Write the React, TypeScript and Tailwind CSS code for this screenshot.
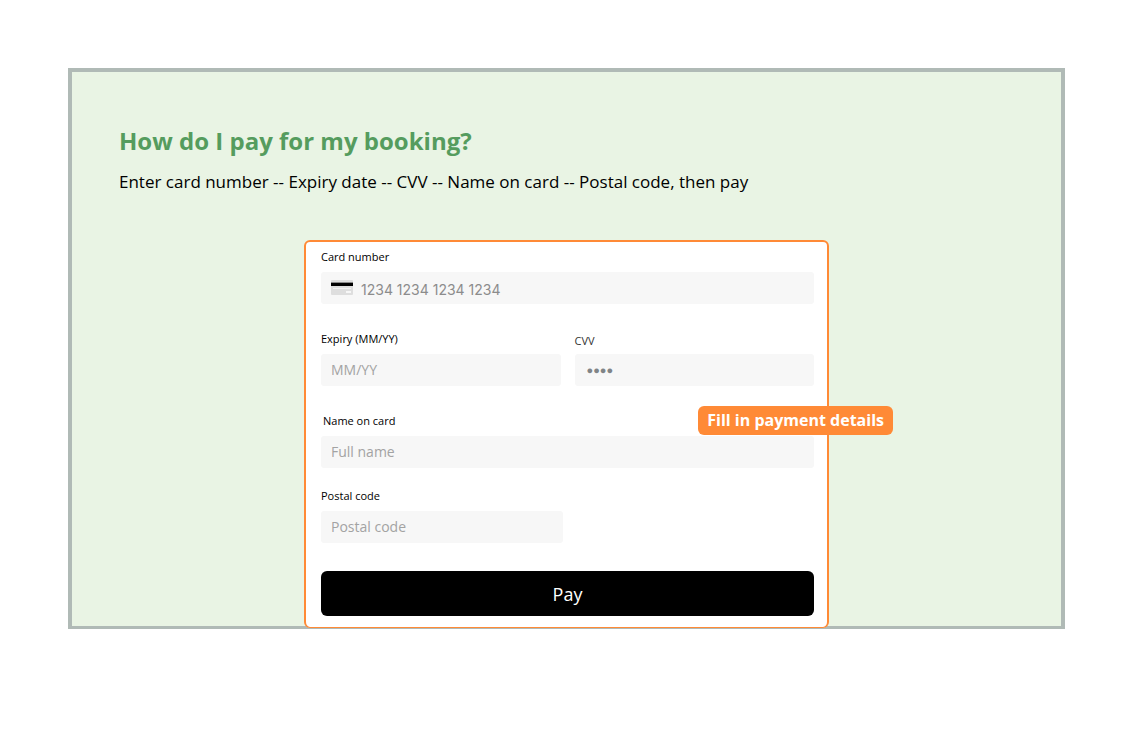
import { clsx } from 'clsx';

interface FieldProps {
  id: string;
  label: string;
  placeholder: string;
  labelClass?: string;
  inputClass?: string;
}

function CardIcon() {
  return (
    <svg
      aria-hidden="true"
      viewBox="0 0 22 15"
      className="pointer-events-none absolute top-2 left-2.5 h-[15px] w-[22px]"
    >
      <rect width="22" height="15" rx="1" fill="#dedede" />
      <rect y="3" width="22" height="3" fill="#000" />
      <rect y="2" width="22" height="1" fill="#8a8a8a" />
      <rect x="2" y="8" width="18" height="1" fill="#f2f2f2" />
      <rect x="15" y="11" width="5" height="2" fill="#f7f7f7" />
    </svg>
  );
}

function Field({
  id,
  label,
  placeholder,
  labelClass = 'text-black',
  inputClass = 'px-2.5 pb-0.5 text-sm placeholder:text-[#a3a3a3]',
}: FieldProps) {
  return (
    <div className="flex min-w-0 flex-col">
      <label
        htmlFor={id}
        className={clsx('text-[11px] leading-[18px]', labelClass)}
      >
        {label}
      </label>
      <div className="relative mt-1.5">
        {id === 'card-number' && <CardIcon />}
        <input
          id={id}
          type="text"
          placeholder={placeholder}
          className={clsx(
            'block h-8 w-full rounded-[3px] bg-[#f7f7f7] outline-none placeholder:opacity-100',
            inputClass,
          )}
        />
      </div>
    </div>
  );
}

export default function App() {
  return (
    <main className="bg-white p-17 font-['Open_Sans',sans-serif]">
      <section className="border-4 border-b-[3px] border-[#b0bab6] bg-[#e9f4e4]">
        <header className="px-[47px] pt-[51px]">
          <h1 className="text-2xl leading-9 font-bold text-[#559c5e]">
            How do I pay for my booking?
          </h1>
          <p className="mt-[11px] text-[17px] leading-6 text-black">
            Enter card number -- Expiry date -- CVV -- Name on card -- Postal
            code, then pay
          </p>
        </header>

        <form
          onSubmit={(e) => e.preventDefault()}
          className="relative mx-auto mt-[46px] -mb-0.5 max-w-[525px] rounded-md border-2 border-b border-[#ff8a36] bg-white pt-1.5 pr-[13px] pb-[11px] pl-[15px]"
        >
          <Field
            id="card-number"
            label="Card number"
            placeholder="1234 1234 1234 1234"
            inputClass="pl-10 pr-2.5 pt-0.5 text-sm font-['Inter',sans-serif] placeholder:text-[#8c8c8c]"
          />
          <div className="mt-[26px] grid grid-cols-2 gap-3.5">
            <Field id="expiry" label="Expiry (MM/YY)" placeholder="MM/YY" />
            <Field
              id="cvv"
              label="CVV"
              placeholder="●●●●"
              labelClass="pt-0.5 -mb-0.5 text-[#333]"
              inputClass="px-3 pb-0.5 text-[11px] placeholder:text-[#808487]"
            />
          </div>
          <div className="relative mt-[26px]">
            <Field
              id="name"
              label="Name on card"
              placeholder="Full name"
              labelClass="pl-0.5 text-black"
            />
            <span className="absolute -top-1.5 -right-[79px] rounded-md bg-[#ff8a36] px-[9px] py-0.5 text-base leading-[25px] font-bold whitespace-nowrap text-white">
              Fill in payment details
            </span>
          </div>
          <div className="mt-[19px] w-[242px] max-w-full">
            <Field id="postal" label="Postal code" placeholder="Postal code" />
          </div>
          <button
            type="submit"
            className="mt-7 block h-[45px] w-full rounded-md bg-black text-lg text-white"
          >
            Pay
          </button>
        </form>
      </section>
    </main>
  );
}
